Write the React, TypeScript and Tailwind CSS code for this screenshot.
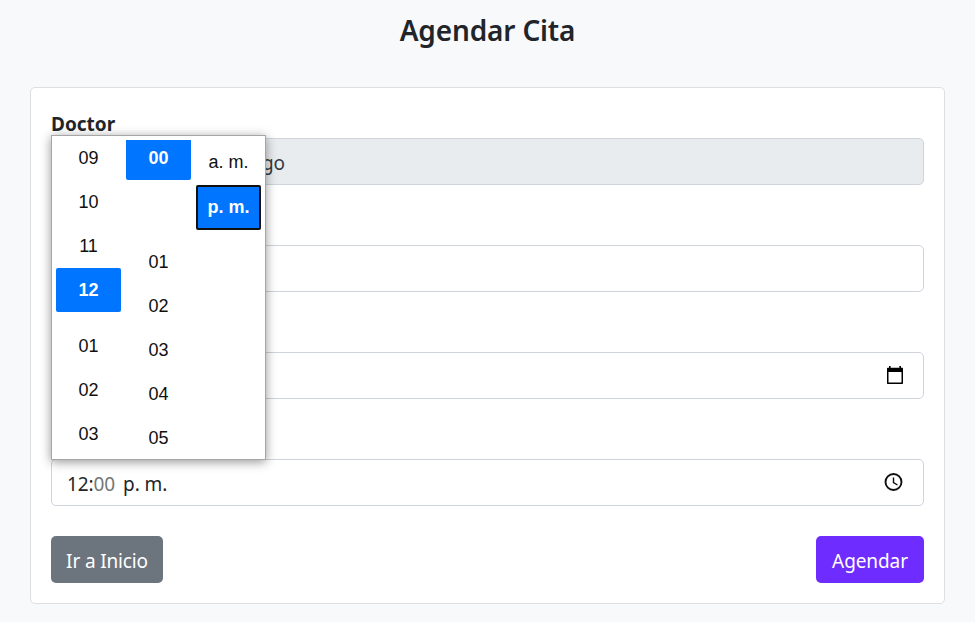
import React from "react";

function Cell({ label, className = "" }: { label: string; className?: string }) {
  return <div className={`flex h-11 shrink-0 items-center justify-center ${className}`}>{label}</div>;
}

function TimePicker() {
  return (
    <div className="absolute left-[20px] top-[47px] z-10 flex h-[325px] w-[215px] gap-[5px] overflow-hidden border border-[#a6a6a6] bg-white px-1 pt-1 font-['Liberation_Sans',Arial,sans-serif] text-[18px] leading-none text-[#101010] shadow-[0_2px_10px_rgba(0,0,0,0.42)]">
      <div className="flex w-[65px] flex-col">
        <Cell label="09" className="-mt-1" />
        <Cell label="10" />
        <Cell label="11" />
        <Cell label="12" className="mb-3 rounded-[2px] bg-[#0075ff] font-bold text-white" />
        <Cell label="01" />
        <Cell label="02" />
        <Cell label="03" />
      </div>
      <div className="flex w-[65px] flex-col">
        <div className="mb-[60px] flex h-10 shrink-0 items-center justify-center rounded-b-[2px] bg-[#0075ff] pb-1 font-bold text-white">00</div>
        <Cell label="01" />
        <Cell label="02" />
        <Cell label="03" />
        <Cell label="04" />
        <Cell label="05" />
      </div>
      <div className="flex w-[65px] flex-col">
        <Cell label="a. m." className="mb-px" />
        <div className="flex h-[45px] shrink-0 items-center justify-center rounded-[2px] border-2 border-[#101010] bg-[#0075ff] pb-0.5 font-bold text-white">p. m.</div>
      </div>
    </div>
  );
}

const field = "flex h-[47px] w-full shrink-0 items-center rounded-[5px] border border-[#ced4da]";

export default function App() {
  return (
    <main className="flex h-[622px] w-[975px] flex-col overflow-hidden bg-[#f8f9fb] px-[30px] font-['Noto_Sans','Open_Sans',sans-serif] text-[#212529]">
      <h1 className="flex h-[87px] shrink-0 justify-center pt-[13px] text-[28px] font-semibold leading-[35px]">
        <span className="tracking-[-0.15px]">Agendar Cita</span>
      </h1>
      <section className="relative flex h-[517px] flex-col rounded-[5px] border border-[#dedfe1] bg-white px-5 pt-5">
        <label className="h-[30px] shrink-0 pt-px text-[19px] font-bold leading-[30px]">Doctor</label>
        <div className={`${field} bg-[#e9ecef] pl-[210px] pt-[3px] text-[19px] tracking-[-0.3px] text-[#343a40]`}>go</div>
        <div className={`${field} mt-[60px]`} />
        <div className={`${field} mt-[60px] justify-end pr-[16px]`}>
          <svg className="-mt-px" width="24" height="24" viewBox="0 0 24 24" fill="#000">
            <path fillRule="evenodd" d="M6 3h1.6v1.7h8.8V3H18v1.7h1c.6 0 1 .4 1 1V20c0 .6-.4 1-1 1H5c-.6 0-1-.4-1-1V5.700c0-.6.4-1 1-1h1zM5.500 9v10.500h13V9z" />
          </svg>
        </div>
        <div className={`${field} mt-[60px] justify-between pl-[15px] pr-5 text-[19px]`}>
          <span className="whitespace-pre pt-[3px] tracking-[-0.1px]">12:<span className="text-[#757575]">00</span><span className="ml-2">p. m.</span></span>
          <svg className="-mt-px" width="20" height="20" viewBox="0 0 20 20" fill="none" stroke="#101010">
            <circle cx="10.500" cy="10" r="8" strokeWidth="1.9" />
            <path d="M10.500 5.500v5l4 2.500" strokeWidth="1.4" />
          </svg>
        </div>
        <div className="mt-[30px] flex justify-between text-[19px] text-white">
          <button className="h-[47px] w-[112px] rounded-[5px] bg-[#6c757d] pt-[3px] tracking-[-0.15px]">Ir a Inicio</button>
          <button className="h-[47px] w-[108px] rounded-[5px] bg-[#6f2cff] pt-[3px] tracking-[-0.1px]">Agendar</button>
        </div>
        <TimePicker />
      </section>
    </main>
  );
}
